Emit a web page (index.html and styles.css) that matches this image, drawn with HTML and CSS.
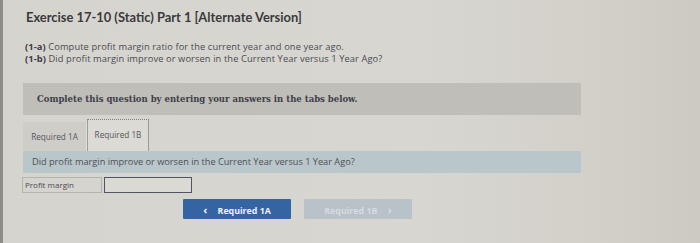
FILE: index.html
```html
<!DOCTYPE html>
<html lang="en">
<head>
<meta charset="UTF-8">
<meta name="viewport" content="width=device-width, initial-scale=1.0">
<title>Exercise 17-10 (Static) Part 1</title>
<link rel="stylesheet" href="styles.css">
</head>
<body>
<div class="page">
<h1>Exercise 17-10 (Static) Part 1 [Alternate Version]</h1>
<div class="intro">
<p><b>(1-a)</b> Compute profit margin ratio for the current year and one year ago.</p>
<p><b>(1-b)</b> Did profit margin improve or worsen in the Current Year versus 1 Year Ago?</p>
</div>
<div class="instructions">Complete this question by entering your answers in the tabs below.</div>
<div class="tabs">
<div class="tab">Required 1A</div>
<div class="tab active">Required 1B</div>
</div>
<div class="question">Did profit margin improve or worsen in the Current Year versus 1 Year Ago?</div>
<div class="answer-row">
<div class="answer-label">Profit margin</div>
<input type="text" class="answer-input">
</div>
<div class="nav">
<button class="nav-btn prev"><span class="chev">&lsaquo;</span> Required 1A</button>
<button class="nav-btn next">Required 1B <span class="chev">&rsaquo;</span></button>
</div>
</div>
</body>
</html>
```

FILE: styles.css
```css
body {
margin: 0;
height: 243px;
background: linear-gradient(90deg, #d6d4cf 0%, #d8d6d1 60%, #d3d0ca 85%, #cdcac4 100%);
font-family: 'Open Sans', 'Liberation Sans', sans-serif;
color: #4b4b52;
border-left: 3px solid #8e8c88;
box-sizing: border-box;
}
.page {
width: 558px;
padding: 6px 0 0 20px;
}
h1 {
margin: 0 0 0 3px;
font-family: Lato, 'Open Sans', sans-serif;
font-size: 12.9px;
font-weight: 700;
line-height: 22px;
color: #3a3a3d;
}
.intro {
margin-top: 13px;
font-size: 9.3px;
letter-spacing: 0.1px;
line-height: 12px;
}
.intro p { margin: 0 0 0 2px; }
.intro b { font-weight: 700; color: #3c3c44; }
.instructions {
margin-top: 18px;
height: 32px;
background: #bfbeb9;
padding-left: 14px;
font-family: 'DejaVu Serif', 'Liberation Serif', serif;
font-weight: bold;
font-size: 8.5px;
line-height: 32px;
color: #404048;
}
.tabs {
display: flex;
align-items: flex-end;
margin-top: 4px;
height: 32px;
}
.tab {
width: 64px;
height: 29px;
box-sizing: border-box;
background: #cfcdc8;
font-size: 8.2px;
line-height: 29px;
text-align: center;
color: #55555c;
border-right: 1px solid #e2e0db;
}
.tab.active {
width: 62px;
height: 32px;
background: #dcdad5;
border: 1px solid #9d9c98;
border-top: 1px dotted #7e7d7a;
border-bottom: none;
line-height: 30px;
}
.question {
height: 22px;
background: #b9c6ca;
padding-left: 9px;
font-size: 9.2px;
line-height: 22px;
color: #4e5058;
}
.answer-row {
display: flex;
margin-top: 4px;
}
.answer-label {
width: 80px;
height: 16px;
box-sizing: border-box;
margin-left: -1px;
border: 1px solid #b6b4af;
background: #d6d4cf;
font-size: 8px;
line-height: 14px;
padding-left: 2px;
color: #4a4a52;
}
.answer-input {
width: 88px;
height: 16px;
box-sizing: border-box;
margin: 0 0 0 2px;
border: 1px solid #4f5565;
background: #dbd9d4;
}
.nav {
display: flex;
gap: 13px;
margin: 6px 0 0 160px;
}
.nav-btn {
width: 108px;
height: 20px;
border: none;
border-radius: 1px;
font-family: 'Open Sans', 'Liberation Sans', sans-serif;
font-size: 8.8px;
font-weight: 700;
padding: 0;
}
.prev {
background: #3564a3;
color: #eef1f6;
}
.next {
background: #b9c1c9;
color: #d6dbe0;
}
.chev {
font-size: 11px;
margin: 0 8px 0 0;
}
.next .chev { margin: 0 0 0 8px; }
```
